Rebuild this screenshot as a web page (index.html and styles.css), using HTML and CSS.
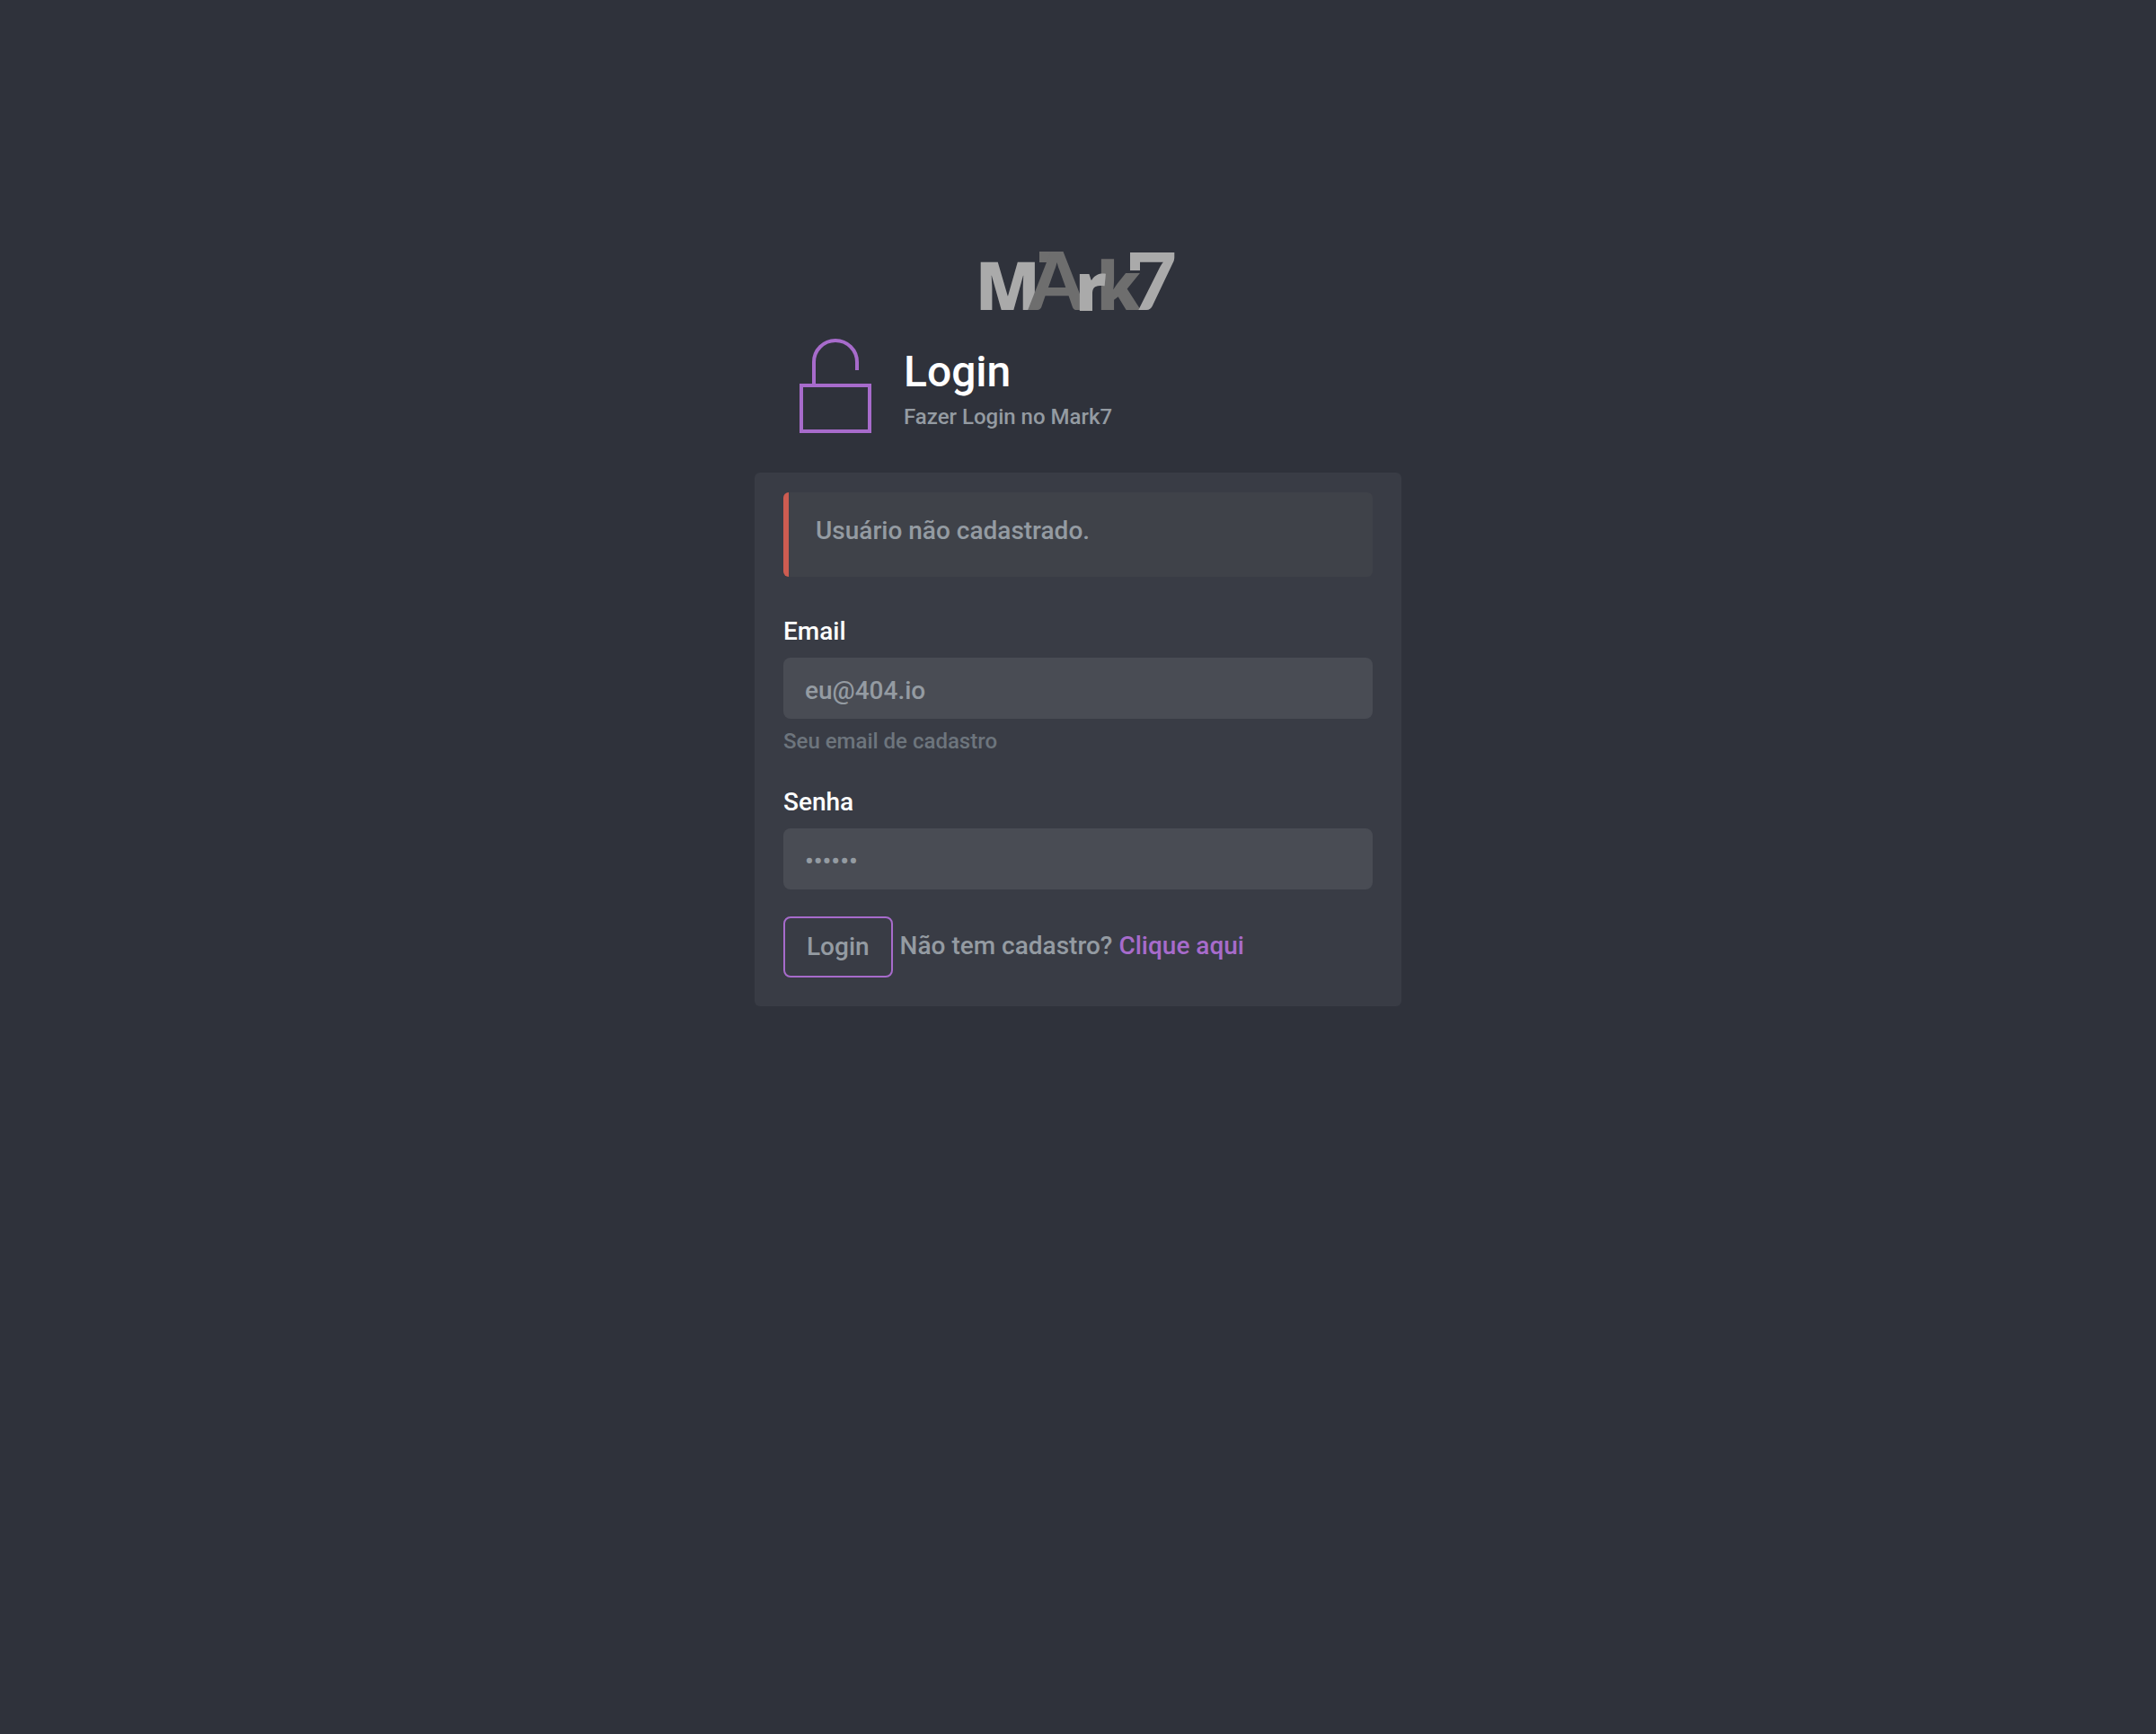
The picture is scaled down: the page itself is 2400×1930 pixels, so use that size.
FILE: index.html
```html
<!DOCTYPE html>
<html lang="pt-BR">
<head>
<meta charset="utf-8">
<title>Mark7 - Login</title>
<link rel="stylesheet" href="styles.css">
</head>
<body>
<main class="login">
  <svg class="logo" viewBox="0 0 240 90" role="img" aria-label="Mark7">
    <text class="logo-wide logo-light" x="6" y="75" font-size="74">M</text>
    <rect class="logo-dark" x="77" y="10" width="22" height="12"/>
    <text class="logo-dark" x="65" y="75" font-size="90">A</text>
    <text class="logo-wide logo-dark" x="141" y="75" font-size="74">k</text>
    <text class="logo-wide logo-light" x="117" y="76" font-size="74">r</text>
    <text class="logo-light" x="179" y="75" font-size="88">7</text>
    <rect class="logo-light" x="178" y="11" width="11" height="20"/>
  </svg>

  <header class="header">
    <svg class="header-icon" viewBox="0 0 120 120" aria-hidden="true">
      <rect x="22" y="59" width="76" height="51"/>
      <path d="M36 59V33a24 24 0 0 1 48 0v9"/>
    </svg>
    <div class="header-text">
      <h1 class="title">Login</h1>
      <p class="subtitle">Fazer Login no Mark7</p>
    </div>
  </header>

  <form class="card">
    <div class="alert" role="alert">Usuário não cadastrado.</div>
    <div class="field">
      <label class="label" for="email">Email</label>
      <input class="input" id="email" type="email" value="eu@404.io" aria-describedby="email-help">
      <small class="help" id="email-help">Seu email de cadastro</small>
    </div>
    <div class="field">
      <label class="label" for="senha">Senha</label>
      <input class="input" id="senha" type="password" value="123456">
    </div>
    <div class="actions">
      <button class="button" type="submit">Login</button>
      <p class="signup">Não tem cadastro? <a class="link" href="#cadastro">Clique aqui</a></p>
    </div>
  </form>
</main>
</body>
</html>
```
FILE: styles.css
```css
* {
  box-sizing: border-box;
}

body {
  margin: 0;
  min-height: 100vh;
  background: #2f323b;
  color: #949ba2;
  font-family: Roboto, "Liberation Sans", sans-serif;
  font-size: 28px;
  font-weight: 500;
  line-height: 40px;
}

h1,
p {
  margin: 0;
}

.login {
  display: flex;
  flex-direction: column;
  max-width: 720px;
  margin: 0 auto;
  padding: 270px 0 40px;
}

.logo {
  align-self: center;
  width: 240px;
  height: 90px;
  font-family: Lato, sans-serif;
  font-weight: 900;
}

.logo-wide {
  font-family: "Open Sans", sans-serif;
  font-weight: 800;
}

.logo-light {
  fill: #aaaaaa;
}

.logo-dark {
  fill: #6e6e6e;
}

.header {
  display: flex;
  gap: 16px;
  margin: 10px 0 36px;
  padding-left: 30px;
}

.header-icon {
  width: 120px;
  height: 120px;
  fill: none;
  stroke: #a76bcb;
  stroke-width: 4;
}

.header-text {
  padding-top: 16px;
}

.title {
  margin-bottom: 6px;
  color: #ffffff;
  font-size: 48px;
  font-weight: 500;
  line-height: 56px;
}

.subtitle {
  font-size: 24px;
  line-height: 32px;
}

.card {
  padding: 22px 32px 32px;
  border-radius: 6px;
  background: #393c45;
}

.alert {
  margin-bottom: 41px;
  padding: 23px 30px 31px;
  border-left: 6px solid #cd5c51;
  border-radius: 6px;
  background: #3f4249;
}

.field {
  display: flex;
  flex-direction: column;
  margin-bottom: 32px;
}

.label {
  margin-bottom: 9px;
  color: #ffffff;
}

.input {
  width: 100%;
  height: 68px;
  padding: 4px 24px 0;
  border: 0;
  border-radius: 8px;
  background: #494c54;
  color: inherit;
  font: inherit;
}

.help {
  margin-top: 9px;
  color: #6d757d;
  font-size: 24px;
  line-height: 32px;
}

.actions {
  display: flex;
  align-items: center;
  gap: 8px;
  margin-top: -2px;
}

.button {
  height: 68px;
  padding: 0 24px;
  border: 2px solid #a76bcb;
  border-radius: 8px;
  background: transparent;
  color: inherit;
  font: inherit;
}

.signup {
  padding-bottom: 2px;
}

.link {
  color: #a76bcb;
  text-decoration: none;
}
```
